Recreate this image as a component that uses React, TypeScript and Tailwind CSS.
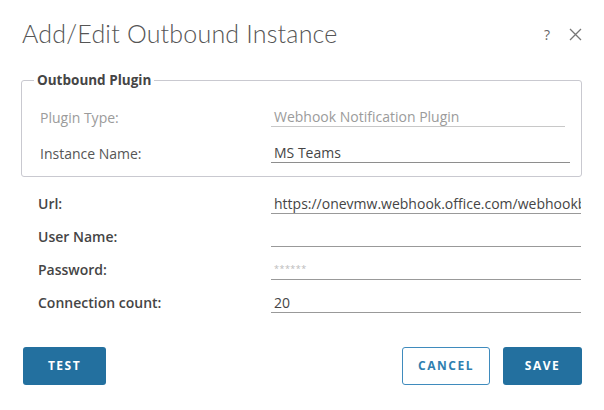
import React from "react";

function Row({
  label,
  value,
  valueClass,
}: {
  label: string;
  value: string;
  valueClass: string;
}) {
  return (
    <div className="flex h-[33px] items-center">
      <div className="w-[233px] text-[14px] font-semibold text-[#454545]">{label}</div>
      <div className={`flex h-[20px] w-[310px] items-center overflow-hidden whitespace-nowrap border-b border-[#999] pl-[3px] ${valueClass}`}>
        {value}
      </div>
    </div>
  );
}

export default function App() {
  return (
    <div className="h-[410px] w-[604px] bg-white font-['Open_Sans',sans-serif] text-[#565656]">
      <div className="pt-[18px]">
        <div className="flex h-8 items-center pl-[22px] pr-[21px]">
          <div className="flex-1 font-['Lato',sans-serif] text-[25px] font-light tracking-[0.2px] text-[#555]">Add/Edit Outbound Instance</div>
          <div className="mr-[19px] text-[14px] text-[#666]">?</div>
          <svg width="13" height="13" viewBox="0 0 13 13" className="mr-[1px]">
            <path d="M1 1 L12 12 M12 1 L1 12" stroke="#777" strokeWidth="1.3" />
          </svg>
        </div>
      </div>

      <div className="relative ml-[21px] mt-[30px] w-[561px] rounded-[3px] border border-[#c9c9d0] pb-[5px] pl-[18px] pt-[18px]">
        <span className="absolute left-[12px] top-[-9px] bg-white px-[3px] text-[13.5px] font-bold leading-[16px] text-[#454545]">
          Outbound Plugin
        </span>
        <div className="flex h-9 items-center">
          <div className="w-[231px] text-[14px] text-[#9b9b9b]">Plugin Type:</div>
          <div className="flex h-[20px] w-[294px] items-center border-b border-[#c8c8c8] pl-[3px] text-[14px] text-[#9b9b9b]">
            Webhook Notification Plugin
          </div>
        </div>
        <div className="flex h-9 items-center">
          <div className="w-[231px] text-[14px] text-[#565656]">Instance Name:</div>
          <div className="flex h-[20px] w-[299px] items-center border-b border-[#8e8e8e] pl-[3px] text-[14px] text-[#454545]">
            MS Teams
          </div>
        </div>
      </div>

      <div className="mt-[10px] pl-[38px]">
        <Row label="Url:" value="https://onevmw.webhook.office.com/webhookb2/" valueClass="text-[14px] text-[#454545]" />
        <Row label="User Name:" value="" valueClass="text-[14px]" />
        <Row label="Password:" value="******" valueClass="text-[9px] tracking-[0.5px] text-[#bbbbbb]" />
        <Row label="Connection count:" value="20" valueClass="text-[14px] text-[#454545]" />
      </div>

      <div className="mt-[28px] flex items-center pl-[23px] pr-[22px]">
        <button className="h-[38px] w-[83px] rounded-[3px] bg-[#23709f] text-[12px] font-bold tracking-[1.5px] text-white">TEST</button>
        <div className="flex-1" />
        <button className="h-[38px] w-[88px] rounded-[3px] border border-[#3f8bbd] bg-white text-[12px] font-bold tracking-[1.5px] text-[#2f7fb0]">CANCEL</button>
        <button className="ml-[13px] h-[38px] w-[79px] rounded-[3px] bg-[#23709f] text-[12px] font-bold tracking-[1.5px] text-white">SAVE</button>
      </div>
    </div>
  );
}
